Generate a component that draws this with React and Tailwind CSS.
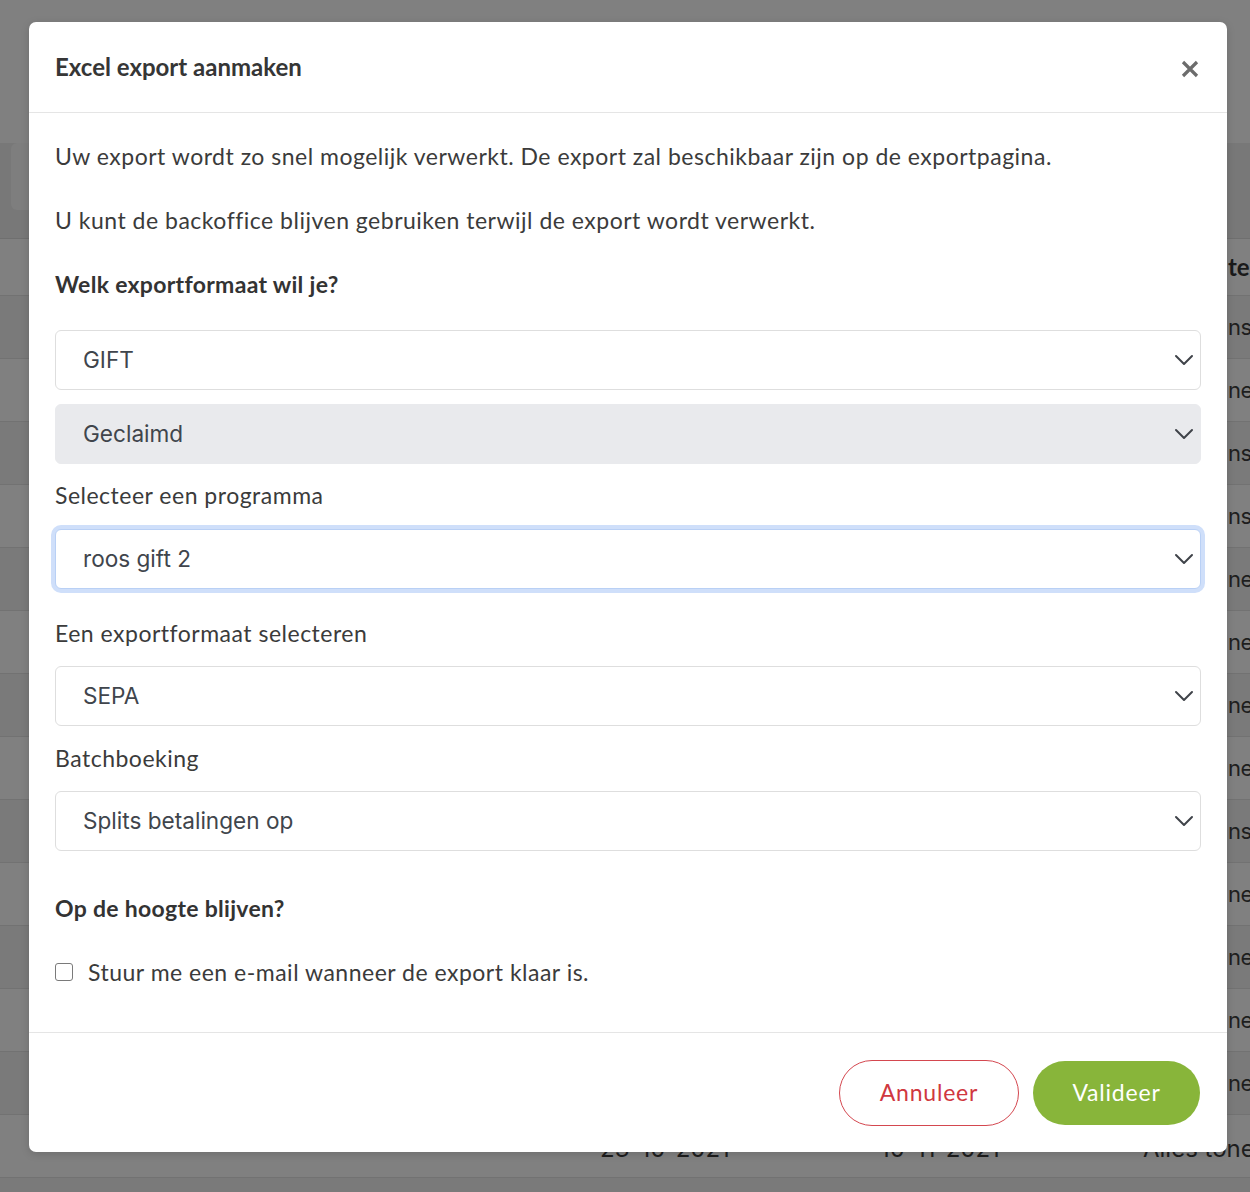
import React from "react";

const body = { fontFamily: "Lato, 'Open Sans', sans-serif" };
const sel = { fontFamily: "Inter, 'Noto Sans', sans-serif" };

function Chevron() {
  return (
    <svg width="20" height="12" viewBox="0 0 20 12" fill="none" className="shrink-0">
      <path d="M2 2l8 8 8-8" stroke="#3f4349" strokeWidth="2" strokeLinecap="round" strokeLinejoin="round" />
    </svg>
  );
}

function Select({ value, disabled, focused }) {
  return (
    <div
      className={
        "flex h-[60px] items-center justify-between rounded-[6px] border pl-[27px] pr-[6px] " +
        (disabled ? "border-[#e9eaed] bg-[#e9eaed] " : "bg-white ") +
        (focused ? "border-[#b9d0f5] ring-4 ring-[#cfdffa] " : disabled ? "" : "border-[#dedede] ")
      }
    >
      <span className="text-[22.6px] text-[#40454c]" style={sel}>{value}</span>
      <Chevron />
    </div>
  );
}

const rows = [
  { t: "nsa", c: "bg-[#7a7a7a]" },
  { t: "ner", c: "bg-[#808080]" },
  { t: "nsa", c: "bg-[#7a7a7a]" },
  { t: "nsa", c: "bg-[#808080]" },
  { t: "ner", c: "bg-[#7a7a7a]" },
  { t: "ner", c: "bg-[#808080]" },
  { t: "ner", c: "bg-[#7a7a7a]" },
  { t: "ner", c: "bg-[#808080]" },
  { t: "nsa", c: "bg-[#7a7a7a]" },
  { t: "ner", c: "bg-[#808080]" },
  { t: "ner", c: "bg-[#7a7a7a]" },
  { t: "ner", c: "bg-[#808080]" },
  { t: "ner", c: "bg-[#7a7a7a]" },
];

export default function App() {
  return (
    <div className="relative h-[1192px] w-[1250px] overflow-hidden bg-[#808080]" style={body}>
      {/* dimmed background page */}
      <div className="flex flex-col">
        <div className="h-[143px]" />
        <div className="flex h-[95px] items-start bg-[#787878]">
          <div className="ml-[11px] h-[67px] w-[220px] rounded-[6px] bg-[#7e7e7e]" />
        </div>
        <div className="flex h-[57px] items-center border-t border-[#6f6f6f] bg-[#808080]">
          <span className="ml-[1228px] whitespace-nowrap text-[24px] font-bold text-[#1a1a1a]">te</span>
        </div>
        {rows.map((r, i) => (
          <div key={i} className={"flex h-[63px] items-center border-t border-[#727272] " + r.c}>
            <span className="ml-[1228px] whitespace-nowrap text-[22px] tracking-[-0.5px] text-[#1e1e1e]" style={sel}>{r.t}</span>
          </div>
        ))}
        <div className="relative h-[63px] border-t border-[#727272] bg-[#808080] text-[24px] text-[#1e1e1e]" style={sel}>
          <span className="absolute left-[600px] top-[16px]">23-10-2021</span>
          <span className="absolute left-[880px] top-[16px]">10-11-2021</span>
          <span className="absolute left-[1143px] top-[16px] whitespace-nowrap">Alles tonen</span>
        </div>
        <div className="h-[20px] border-t border-[#727272] bg-[#7a7a7a]" />
      </div>

      {/* modal */}
      <div className="absolute left-[29px] top-[22px] flex h-[1130px] w-[1198px] flex-col rounded-[7px] bg-white shadow-[0_2px_8px_rgba(0,0,0,0.15)]">
        <div className="flex h-[91px] shrink-0 items-center justify-between border-b border-[#e5e5e5] pl-[26px] pr-[27px]">
          <h2 className="text-[24px] font-bold text-[#363636]">Excel export aanmaken</h2>
          <svg width="20" height="20" viewBox="0 0 20 20" className="mt-[4px]">
            <path d="M3 3l14 14M17 3L3 17" stroke="#6c6c6c" strokeWidth="3.2" strokeLinecap="butt" />
          </svg>
        </div>

        <div className="flex flex-1 flex-col px-[26px] pt-[27px] text-[23px] leading-[32px] tracking-[0.5px] text-[#3b3b3b]">
          <p>Uw export wordt zo snel mogelijk verwerkt. De export zal beschikbaar zijn op de exportpagina.</p>
          <p className="mt-[32px]">U kunt de backoffice blijven gebruiken terwijl de export wordt verwerkt.</p>
          <h3 className="mt-[32px] font-bold tracking-[0.3px] text-[#333]">Welk exportformaat wil je?</h3>

          <div className="mt-[30px] tracking-normal"><Select value="GIFT" /></div>
          <div className="mt-[14px] tracking-normal"><Select value="Geclaimd" disabled /></div>
          <label className="mt-[15px]">Selecteer een programma</label>
          <div className="mt-[18px] tracking-normal"><Select value="roos gift 2" focused /></div>
          <label className="mt-[28px]">Een exportformaat selecteren</label>
          <div className="mt-[17px] tracking-normal"><Select value="SEPA" /></div>
          <label className="mt-[16px]">Batchboeking</label>
          <div className="mt-[17px] tracking-normal"><Select value="Splits betalingen op" /></div>

          <h3 className="mt-[41px] font-bold tracking-[0.3px] text-[#333]">Op de hoogte blijven?</h3>
          <div className="mt-[32px] flex items-center gap-[15px]">
            <span className="h-[18px] w-[18px] shrink-0 rounded-[3px] border border-[#7a7a7a] bg-white" />
            <span>Stuur me een e-mail wanneer de export klaar is.</span>
          </div>
        </div>

        <div className="flex h-[120px] shrink-0 items-center justify-end gap-[14px] border-t border-[#e5e5e5] pr-[27px]">
          <button className="h-[66px] w-[180px] rounded-full border border-[#d4474f] bg-white text-[23px] tracking-[0.8px] text-[#d0383f]">Annuleer</button>
          <button className="h-[64px] w-[167px] rounded-full bg-[#88b53a] text-[23px] tracking-[0.8px] text-white">Valideer</button>
        </div>
      </div>
    </div>
  );
}
